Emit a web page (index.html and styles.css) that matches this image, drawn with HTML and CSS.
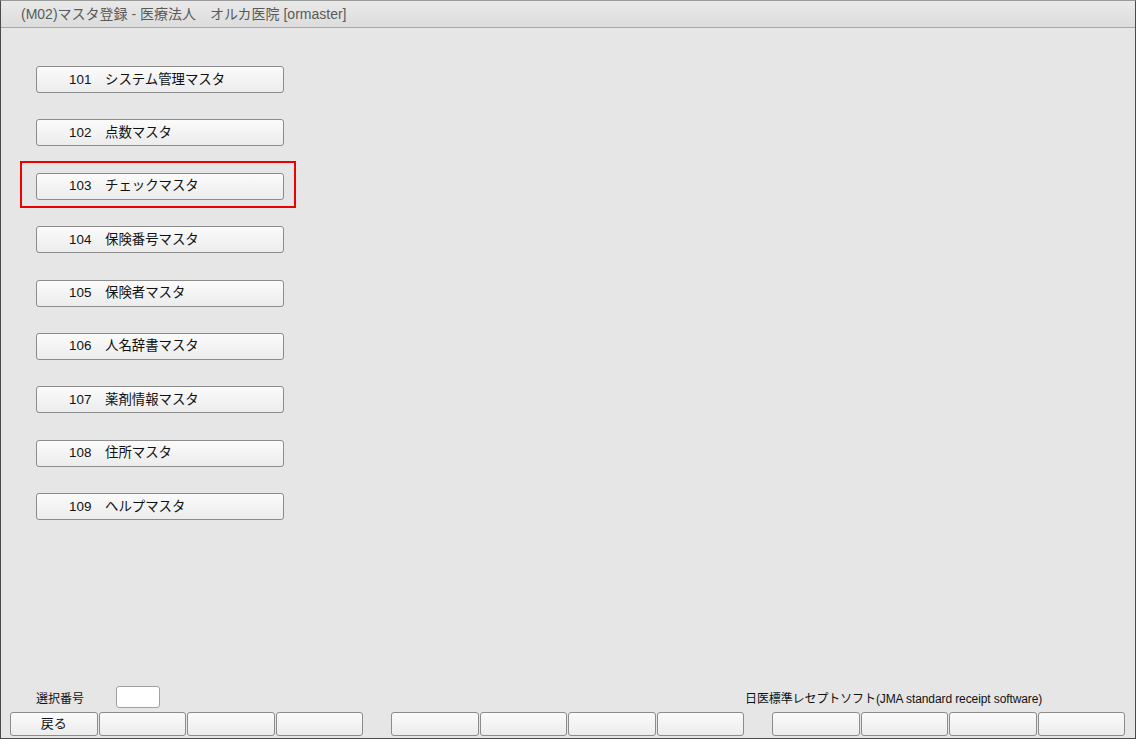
FILE: index.html
```html
<!DOCTYPE html>
<html>
<head>
    <meta charset="utf-8">
    <link rel="stylesheet" href="styles.css">
</head>
<body>
  <div class="window">
    <div class="title-bar">(M02)マスタ登録 - 医療法人　オルカ医院 [ormaster]</div>

    <div class="menu">
      <div class="menu-item"><button class="menu-btn"><span class="num">101</span>システム管理マスタ</button></div>
      <div class="menu-item"><button class="menu-btn"><span class="num">102</span>点数マスタ</button></div>
      <div class="menu-item focused"><button class="menu-btn"><span class="num">103</span>チェックマスタ</button></div>
      <div class="menu-item"><button class="menu-btn"><span class="num">104</span>保険番号マスタ</button></div>
      <div class="menu-item"><button class="menu-btn"><span class="num">105</span>保険者マスタ</button></div>
      <div class="menu-item"><button class="menu-btn"><span class="num">106</span>人名辞書マスタ</button></div>
      <div class="menu-item"><button class="menu-btn"><span class="num">107</span>薬剤情報マスタ</button></div>
      <div class="menu-item"><button class="menu-btn"><span class="num">108</span>住所マスタ</button></div>
      <div class="menu-item"><button class="menu-btn"><span class="num">109</span>ヘルプマスタ</button></div>
    </div>

    <div class="footer">
      <div class="select-row">
        <label class="select-label">選択番号</label>
        <input class="select-input" type="text">
        <span class="product">日医標準レセプトソフト(JMA standard receipt software)</span>
      </div>
      <div class="fkeys">
        <div class="fkey-group">
          <button class="fkey">戻る</button>
          <button class="fkey"></button>
          <button class="fkey"></button>
          <button class="fkey"></button>
        </div>
        <div class="fkey-group">
          <button class="fkey"></button>
          <button class="fkey"></button>
          <button class="fkey"></button>
          <button class="fkey"></button>
        </div>
        <div class="fkey-group">
          <button class="fkey"></button>
          <button class="fkey"></button>
          <button class="fkey"></button>
          <button class="fkey"></button>
        </div>
      </div>
    </div>
  </div>
</body>
</html>
```

FILE: styles.css
```css
html, body {
    margin: 0;
    padding: 0;
}

body {
    font-family: "Liberation Sans", "Noto Sans CJK JP", sans-serif;
    color: #111;
    background: #e6e6e6;
}

.window {
    width: 1136px;
    height: 739px;
    box-sizing: border-box;
    border: 1px solid #4a4a4a;
    border-top-color: #9a9a9a;
    background: #e6e6e6;
    display: flex;
    flex-direction: column;
}

.title-bar {
    height: 26px;
    line-height: 26px;
    padding-left: 20px;
    font-size: 14px;
    color: #5a5a5a;
    background: linear-gradient(#e9e9e9, #dcdcdc);
    border-bottom: 1px solid #a8a8a8;
}

.menu {
    padding: 38px 0 0 35px;
    display: flex;
    flex-direction: column;
    gap: 26.4px;
}

.menu-item {
    position: relative;
    width: 248px;
}

.menu-item.focused::after {
    content: "";
    position: absolute;
    left: -16px;
    right: -12px;
    top: -12px;
    bottom: -8px;
    border: 2px solid #f00000;
    pointer-events: none;
}

.menu-btn {
    display: block;
    width: 248px;
    height: 27px;
    padding: 0 0 4px 32px;
    text-align: left;
    font-family: "Liberation Sans", "Noto Sans CJK JP", sans-serif;
    font-size: 13.4px;
    color: #111;
    background: linear-gradient(#fbfbfb, #ececec);
    border: 1px solid #8c8c8c;
    border-radius: 3px;
}

.menu-btn .num {
    display: inline-block;
    width: 36px;
}

.footer {
    margin-top: auto;
    padding-bottom: 2px;
}

.select-row {
    display: flex;
    align-items: center;
    height: 22px;
    padding-left: 35px;
}

.select-label {
    width: 80px;
    font-size: 12px;
}

.select-input {
    width: 44px;
    height: 22px;
    box-sizing: border-box;
    border: 1px solid #a0a0a0;
    border-radius: 3px;
    background: #fff;
    margin: 0;
    padding: 0;
}

.product {
    margin-left: 585px;
    font-size: 12px;
    letter-spacing: -0.1px;
}

.fkeys {
    display: flex;
    gap: 28px;
    padding-left: 9px;
    margin-top: 4px;
}

.fkey-group {
    display: flex;
    gap: 1px;
}

.fkey {
    width: 87.5px;
    height: 24px;
    padding: 0 0 4px 0;
    font-family: "Liberation Sans", "Noto Sans CJK JP", sans-serif;
    font-size: 13px;
    color: #111;
    background: linear-gradient(#fbfbfb, #ececec);
    border: 1px solid #8c8c8c;
    border-radius: 3px;
}
```
